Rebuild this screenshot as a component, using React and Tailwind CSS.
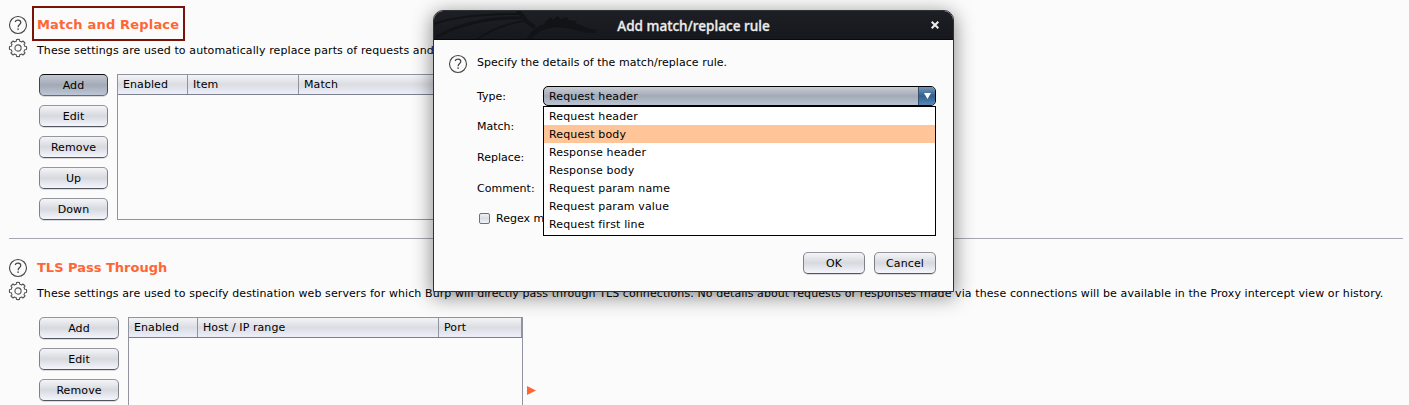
import React from "react";

function HelpIcon() {
  return (
    <svg width="20" height="20" viewBox="0 0 20 20" fill="none" className="block shrink-0">
      <circle cx="10" cy="10" r="8.5" stroke="#444" strokeWidth="1.1" />
      <path d="M7.2 7C7.500 5.700 8.600 5.100 10 5.100C11.600 5.100 12.800 5.900 12.800 7.400C12.800 9.400 10.100 9.700 10.100 12.200" stroke="#444" strokeWidth="1.2" />
      <rect x="9.400" y="13.400" width="1.400" height="1.500" fill="#444" />
    </svg>
  );
}

function polar(radius, degrees) {
  const a = (degrees * Math.PI) / 180;
  return `${(10 + radius * Math.sin(a)).toFixed(2)} ${(10 - radius * Math.cos(a)).toFixed(2)}`;
}

const gearOutline =
  [0, 45, 90, 135, 180, 225, 270, 315]
    .map(
      (a, i) =>
        `${i === 0 ? "M" : "L"}${polar(8.6, a - 10)}A8.6 8.6 0 0 1 ${polar(8.6, a + 10)}` +
        `L${polar(7, a + 14)}A7 7 0 0 1 ${polar(7, a + 31)}`,
    )
    .join("") + "Z";

function GearIcon() {
  return (
    <svg width="20" height="20" viewBox="0 0 20 20" fill="none" className="block shrink-0">
      <g stroke="#555" strokeWidth="1.1" strokeLinejoin="round">
        <path d={gearOutline} />
        <circle cx="10" cy="10" r="3.100" />
      </g>
    </svg>
  );
}

function Button({ children, active = false, width }) {
  return (
    <button
      className={
        "flex h-[22px] shrink-0 items-center justify-center rounded-[5px] border pt-px leading-[14px] tracking-[0.1px] shadow-[0_1px_0_rgba(0,0,0,0.13)] " +
        (active
          ? "border-[#3d4551] border-t-[#0c0e13] border-b-[#626c7c] bg-linear-to-b from-[#c4c8d1] via-[#a3aab7] to-[#bdc6d6] "
          : "border-[#7e8188] border-t-[#94969c] border-b-[#53565e] bg-linear-to-b from-[#f5f5f8] via-[#d7d9df] to-[#f3f6fc] ") +
        width
      }
    >
      {children}
    </button>
  );
}

function ColumnHeader({ children, className }) {
  return (
    <div className={"flex h-full shrink-0 items-center border-r border-[#9193a0] pt-px pl-[5px] leading-[18px] tracking-[0.08px] " + className}>
      {children}
    </div>
  );
}

const headerRow =
  "flex h-[20px] border-b border-[#7c808d] bg-linear-to-b from-[#f3f4f7] via-[#dcdde3] to-[#eceffa]";

const options = [
  "Request header",
  "Request body",
  "Response header",
  "Response body",
  "Request param name",
  "Request param value",
  "Request first line",
];

function Dragon() {
  return (
    <svg className="absolute left-0 top-0" width="180" height="29" viewBox="0 0 180 29" fill="none">
      <g stroke="#121317" strokeWidth="2">
        <path d="M0 13C22 5 50 3 85 3" />
        <path d="M2 26C28 12 56 6 88 7" strokeWidth="3" />
        <path d="M42 29C56 19 70 13 90 10" />
        <path d="M83 0C91 4 89 11 101 16" strokeWidth="4" />
        <path d="M95 29C99 19 108 15 121 14C131 13 139 15 147 17" strokeWidth="5" />
      </g>
      <path d="M110 12L117 6L118 9L124 5L126 8L133 6L134 9L143 10L141 12L153 17L163 19L162 22L154 22L144 20L134 17L120 15Z" fill="#121317" />
    </svg>
  );
}

function RuleDialog() {
  return (
    <div className="absolute left-[433px] top-[10px] flex h-[282px] w-[521px] flex-col rounded-t-[10px] border border-[#303236] bg-[#fbfbfb] shadow-[0_4px_20px_1px_rgba(0,0,0,0.45)]">
      <div className="relative flex h-[29px] shrink-0 items-center justify-center overflow-hidden rounded-t-[9px] border-b border-[#08090c] bg-linear-to-b from-[#1d1f25] to-[#17181d]">
        <Dragon />
        <span className="relative pt-px font-['Noto_Sans',sans-serif] text-[13.6px] leading-[20px] font-medium text-[#eeeeec] [-webkit-text-stroke:0.3px_#eeeeec]">
          Add match/replace rule
        </span>
        <svg className="absolute right-[14px] top-[10px]" width="8" height="8" viewBox="0 0 8 8">
          <path d="M0.7 0.7L7.3 7.3M7.3 0.7L0.7 7.3" stroke="#eeeeec" strokeWidth="2" />
        </svg>
      </div>
      <div className="flex grow flex-col pl-[14px] pr-[17px]">
        <div className="flex h-[46px] items-start pt-[14px]">
          <HelpIcon />
          <span className="ml-[9px] mt-[2px] leading-[14px] tracking-[0.04px]">Specify the details of the match/replace rule.</span>
        </div>
        <div className="flex">
          <div className="flex w-[95px] shrink-0 flex-col overflow-hidden pl-[29px] leading-[14px]">
            <span className="mt-[4px] h-[30px]">Type:</span>
            <span className="h-[31px]">Match:</span>
            <span className="h-[31px]">Replace:</span>
            <span className="h-[30px]">Comment:</span>
            <div className="flex items-center whitespace-nowrap">
              <span className="mb-px ml-[2px] mr-[6px] size-[11px] shrink-0 rounded-[2px] border border-[#6b7180] bg-linear-to-b from-[#f0f1f5] via-[#dadde4] to-[#f0f3fa]" />
              <span className="w-[47px] overflow-hidden">Regex m</span>
            </div>
          </div>
          <div className="relative h-[20px] w-[393px] shrink-0 tracking-[0.14px]">
            <div className="flex h-[20px] overflow-hidden rounded-[5px] border border-black bg-linear-to-b from-[#c9cdd6] via-[#a3aab7] to-[#bac3d2] leading-[18px]">
              <span className="grow pt-px pl-[5px]">Request header</span>
              <span className="flex w-[17px] items-center justify-center border-l border-[#325070] bg-linear-to-b from-[#7797b7] via-[#335f8d] to-[#5988b7]">
                <svg width="7" height="6" viewBox="0 0 7 6">
                  <path d="M0 0H7L3.5 6Z" fill="white" />
                </svg>
              </span>
            </div>
            <ul className="absolute left-0 top-[20px] h-[130px] w-[393px] border border-black bg-white">
              {options.map((option) => (
                <li
                  key={option}
                  className={
                    "h-[18px] pl-[5px] leading-[20px] " + (option === "Request body" ? "bg-[#ffc599]" : "")
                  }
                >
                  {option}
                </li>
              ))}
            </ul>
          </div>
        </div>
        <div className="mt-auto mb-[17px] flex justify-end gap-[9px]">
          <Button width="w-[62px]">OK</Button>
          <Button width="w-[62px]">Cancel</Button>
        </div>
      </div>
    </div>
  );
}

export default function App() {
  return (
    <div className="relative h-[405px] w-[1409px] overflow-hidden bg-[#fbfbfb] font-['DejaVu_Sans',sans-serif] text-[11px] text-black">
      <section className="flex h-[238px] flex-col pl-[8px] pt-[6px]">
        <div className="flex">
          <div className="flex flex-col gap-[3px] pt-[9px]">
            <HelpIcon />
            <GearIcon />
          </div>
          <div className="flex flex-col pl-[4px]">
            <h2 className="flex h-[35px] w-[153px] items-center border-2 border-[#7b120a] pt-[2px] pl-[3px] text-[13px] font-bold tracking-[0.18px] whitespace-nowrap text-[#ff6633]">
              Match and Replace
            </h2>
            <p className="mt-[3px] pl-[5px] leading-[14px] tracking-[0.1px]">
              These settings are used to automatically replace parts of requests and
            </p>
          </div>
        </div>
        <div className="mt-[11px] flex gap-[9px] pl-[31px] pt-[5px]">
          <div className="flex flex-col gap-[9px]">
            <Button width="w-[69px]" active>Add</Button>
            <Button width="w-[69px]">Edit</Button>
            <Button width="w-[69px]">Remove</Button>
            <Button width="w-[69px]">Up</Button>
            <Button width="w-[69px]">Down</Button>
          </div>
          <div className="h-[146px] w-[500px] border border-[#9193a0]">
            <div className={headerRow}>
              <ColumnHeader className="w-[70px]">Enabled</ColumnHeader>
              <ColumnHeader className="w-[111px]">Item</ColumnHeader>
              <ColumnHeader className="grow">Match</ColumnHeader>
            </div>
          </div>
        </div>
      </section>
      <hr className="ml-[9px] w-[1394px] border-[#a5a7b2]" />
      <section className="flex flex-col pl-[8px] pt-[19px]">
        <div className="flex">
          <div className="flex flex-col gap-[3px]">
            <HelpIcon />
            <GearIcon />
          </div>
          <div className="flex flex-col pl-[9px]">
            <h2 className="h-[20px] text-[13px] leading-[20px] font-bold text-[#ff6633]">TLS Pass Through</h2>
            <p className="mt-[9px] h-[14px] leading-[14px] tracking-[0.095px] whitespace-nowrap">
              These settings are used to specify destination web servers for which Burp will directly pass through TLS connections. No details about requests or responses made via these connections will be available in the Proxy intercept view or history.
            </p>
          </div>
        </div>
        <div className="mt-[16px] flex gap-[9px] pl-[31px]">
          <div className="flex flex-col gap-[9px]">
            <Button width="w-[80px]">Add</Button>
            <Button width="w-[80px]">Edit</Button>
            <Button width="w-[80px]">Remove</Button>
          </div>
          <div className="flex">
            <div className="h-[150px] w-[395px] border border-[#9193a0]">
              <div className={headerRow}>
                <ColumnHeader className="w-[69px]">Enabled</ColumnHeader>
                <ColumnHeader className="w-[241px]">Host / IP range</ColumnHeader>
                <ColumnHeader className="grow">Port</ColumnHeader>
              </div>
            </div>
            <svg className="ml-[4px] mt-[69px]" width="9" height="9" viewBox="0 0 9 9">
              <path d="M0 0L9 4.5L0 9Z" fill="#ff6633" />
            </svg>
          </div>
        </div>
      </section>
      <RuleDialog />
    </div>
  );
}
